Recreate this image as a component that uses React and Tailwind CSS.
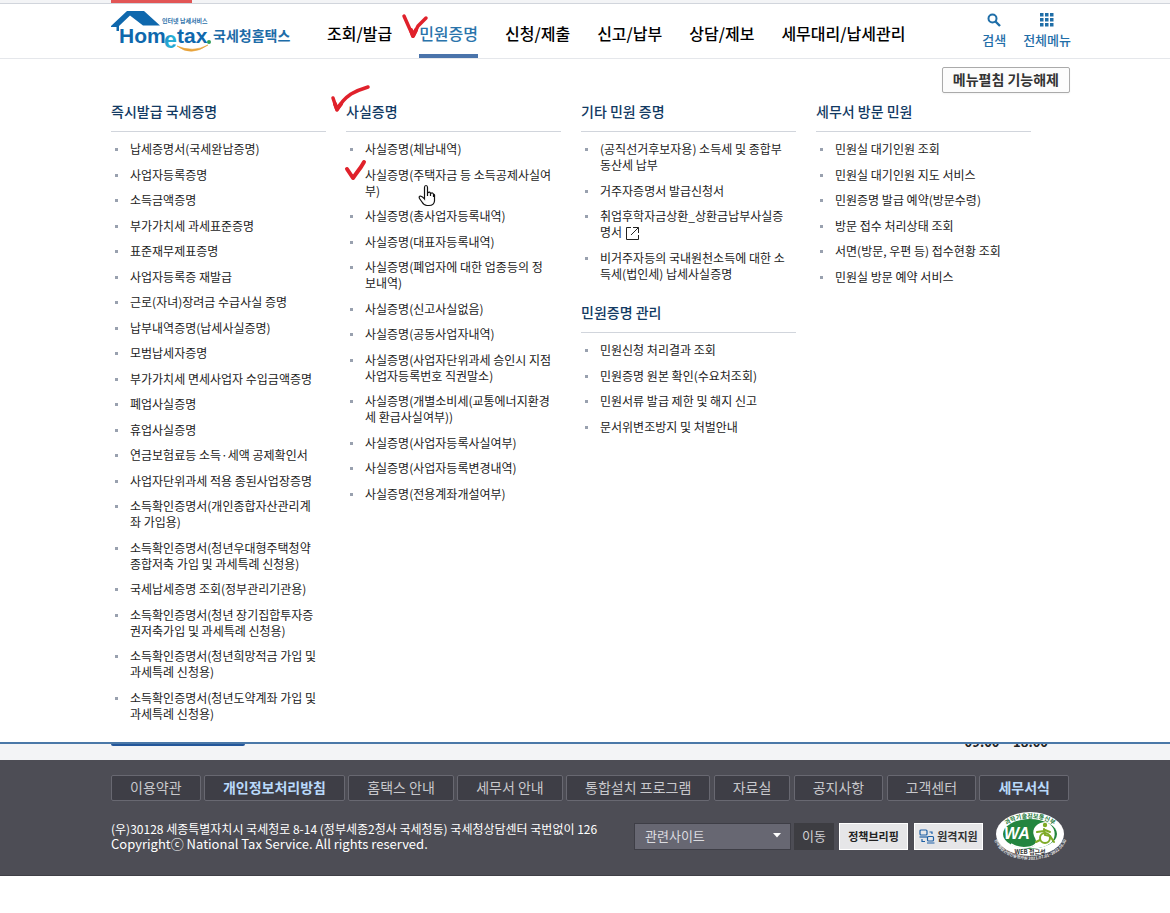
import React, { useState } from 'react';

const NAV_ITEMS = ['조회/발급', '민원증명', '신청/제출', '신고/납부', '상담/제보', '세무대리/납세관리'];

const MENU_COLUMNS = [
    [
        {
            title: '즉시발급 국세증명',
            items: [
                '납세증명서(국세완납증명)',
                '사업자등록증명',
                '소득금액증명',
                '부가가치세 과세표준증명',
                '표준재무제표증명',
                '사업자등록증 재발급',
                '근로(자녀)장려금 수급사실 증명',
                '납부내역증명(납세사실증명)',
                '모범납세자증명',
                '부가가치세 면세사업자 수입금액증명',
                '폐업사실증명',
                '휴업사실증명',
                '연금보험료등 소득·세액 공제확인서',
                '사업자단위과세 적용 종된사업장증명',
                '소득확인증명서(개인종합자산관리계\n좌 가입용)',
                '소득확인증명서(청년우대형주택청약\n종합저축 가입 및 과세특례 신청용)',
                '국세납세증명 조회(정부관리기관용)',
                '소득확인증명서(청년 장기집합투자증\n권저축가입 및 과세특례 신청용)',
                '소득확인증명서(청년희망적금 가입 및\n과세특례 신청용)',
                '소득확인증명서(청년도약계좌 가입 및\n과세특례 신청용)',
            ],
        },
    ],
    [
        {
            title: '사실증명',
            items: [
                '사실증명(체납내역)',
                '사실증명(주택자금 등 소득공제사실여\n부)',
                '사실증명(총사업자등록내역)',
                '사실증명(대표자등록내역)',
                '사실증명(폐업자에 대한 업종등의 정\n보내역)',
                '사실증명(신고사실없음)',
                '사실증명(공동사업자내역)',
                '사실증명(사업자단위과세 승인시 지점\n사업자등록번호 직권말소)',
                '사실증명(개별소비세(교통에너지환경\n세 환급사실여부))',
                '사실증명(사업자등록사실여부)',
                '사실증명(사업자등록변경내역)',
                '사실증명(전용계좌개설여부)',
            ],
        },
    ],
    [
        {
            title: '기타 민원 증명',
            items: [
                '(공직선거후보자용) 소득세 및 종합부\n동산세 납부',
                '거주자증명서 발급신청서',
                '취업후학자금상환_상환금납부사실증\n명서',
                '비거주자등의 국내원천소득에 대한 소\n득세(법인세) 납세사실증명',
            ],
        },
        {
            title: '민원증명 관리',
            items: [
                '민원신청 처리결과 조회',
                '민원증명 원본 확인(수요처조회)',
                '민원서류 발급 제한 및 해지 신고',
                '문서위변조방지 및 처벌안내',
            ],
        },
    ],
    [
        {
            title: '세무서 방문 민원',
            items: [
                '민원실 대기인원 조회',
                '민원실 대기인원 지도 서비스',
                '민원증명 발급 예약(방문수령)',
                '방문 접수 처리상태 조회',
                '서면(방문, 우편 등) 접수현황 조회',
                '민원실 방문 예약 서비스',
            ],
        },
    ],
];

const EXTERNAL_ITEM = '취업후학자금상환_상환금납부사실증\n명서';

const FOOTER_LINKS = [
    { label: '이용약관' },
    { label: '개인정보처리방침', strong: true },
    { label: '홈택스 안내' },
    { label: '세무서 안내' },
    { label: '통합설치 프로그램' },
    { label: '자료실' },
    { label: '공지사항' },
    { label: '고객센터' },
    { label: '세무서식', strong: true },
];

const Logo = () => (
    <svg width="180" height="48" viewBox="0 0 180 48" role="img" aria-label="Hometax 국세청홈택스">
        <defs>
            <linearGradient id="letterE" x1="0" y1="0" x2="1" y2="1">
                <stop offset="0" stopColor="#1f7fc4" />
                <stop offset="0.6" stopColor="#27b3d6" />
                <stop offset="1" stopColor="#1c86c4" />
            </linearGradient>
        </defs>
        <path d="M0 19 L16 4 H33 L49 18.500 H32 L19 8.500 L8 19 V24 H5.500 V20 H0 Z" fill="#0f68ad" />
        <text x="8" y="36" fontSize="21" fontWeight="700" fill="#0f68ad" fontFamily="'Liberation Sans', sans-serif">Hom</text>
        <text x="53" y="41" fontSize="23" fontWeight="700" fill="url(#letterE)" fontFamily="'Liberation Sans', sans-serif">e</text>
        <text x="66" y="36" fontSize="21" fontWeight="700" fill="#0f68ad" fontFamily="'Liberation Sans', sans-serif">tax</text>
        <circle cx="98" cy="35" r="2" fill="#2e9e5b" />
        <path d="M66 39 Q80 50 97 38 Q82 46 66 39 Z" fill="#e8a33a" stroke="#e8a33a" strokeWidth="0.600" />
        <text x="51" y="16" fontSize="6" fontWeight="700" fill="#2a6fa8" fontFamily="'Noto Sans CJK KR', sans-serif">인터넷 납세서비스</text>
        <text x="102" y="34" fontSize="14" fontWeight="700" fill="#1d6ca8" fontFamily="'Noto Sans CJK KR', sans-serif">국세청홈택스</text>
    </svg>
);

const SearchIcon = () => (
    <svg width="14" height="14" viewBox="0 0 14 14" fill="none" stroke="#1f6ea8" aria-hidden="true">
        <circle cx="5.500" cy="5.500" r="4" strokeWidth="2" />
        <path d="M8.500 8.500 L13 13" strokeWidth="2.400" />
    </svg>
);

const GridIcon = () => (
    <svg width="14" height="14" viewBox="0 0 14 14" fill="#1f6ea8" aria-hidden="true">
        {[0, 5, 10].map((y) => [0, 5, 10].map((x) => <rect key={`${x}-${y}`} x={x} y={y} width="3.500" height="3.500" />))}
    </svg>
);

const ExternalIcon = () => (
    <svg className="inline-block ml-1 -my-1 align-middle" width="13" height="13" viewBox="0 0 13 13" fill="none" stroke="#222" aria-hidden="true">
        <path d="M5 0.500 H0.500 V12.500 H12.500 V8" />
        <path d="M7 0.500 H12.500 V6 M12.500 0.500 L5 8" />
    </svg>
);

const RemoteIcon = () => (
    <svg width="16" height="15" viewBox="0 0 16 15" fill="none" stroke="#1d5fa5" strokeWidth="1.200" aria-hidden="true">
        <rect x="1" y="1" width="7" height="5" rx="1" />
        <path d="M0.500 8 H8.500" />
        <rect x="8.500" y="7.500" width="6" height="4.500" rx="1" fill="#e6e6e8" />
        <path d="M8 14 H15.500 M10.500 3 H13 V5 M3 10 V12.500 H6" />
    </svg>
);

const WebAccessBadge = () => (
    <svg width="74" height="54" viewBox="0 0 74 54" role="img" aria-label="WA WEB 접근성">
        <defs>
            <path id="badgeTop" d="M7 26 A 29 17 0 0 1 65 26" />
            <path id="badgeBottom" d="M0 29 C 7 58 65 58 73 29" />
        </defs>
        <ellipse cx="36" cy="25" rx="34" ry="22" fill="#fff" />
        <ellipse cx="36" cy="25" rx="27" ry="15" fill="#23853f" />
        <path d="M40 27 C37 19 44 13 52 13 C62 17 63 28 57 34 C50 39 42 40 35 39 C42 37 44 34 40 27 Z" fill="#fff" />
        <path d="M17 35 C27 41 40 39 43 33" fill="none" stroke="#fff" strokeWidth="1.500" />
        <text x="10" y="30" fontSize="16" fontWeight="700" fontStyle="italic" fill="#fff" fontFamily="'Liberation Sans', sans-serif">WA</text>
        <g fill="none" stroke="#7fab26" strokeWidth="2" strokeLinecap="round">
            <circle cx="51" cy="29" r="5" />
            <path d="M50 20 L51 26 L56 27 L60 33 M50 22 L43 23 M51 21 L56 23 M46 31 L42 33" />
        </g>
        <circle cx="51" cy="16" r="2.200" fill="#7fab26" />
        <text fontSize="6" fontWeight="700" fill="#267a3c" fontFamily="'Noto Sans CJK KR', sans-serif">
            <textPath href="#badgeTop" startOffset="50%" textAnchor="middle">과학기술정보통신부</textPath>
        </text>
        <text x="36" y="45" textAnchor="middle" fontSize="6" fontWeight="700" fill="#333" fontFamily="'Noto Sans CJK KR', sans-serif">WEB 접근성</text>
        <text fontSize="4" fontWeight="700" fill="#eee" fontFamily="'Noto Sans CJK KR', sans-serif">
            <textPath href="#badgeBottom" startOffset="50%" textAnchor="middle">한국웹접근성인증평가원 2021.07.01~2022.06.30</textPath>
        </text>
    </svg>
);

// hand-drawn red check marks and the pointer, laid over the menu
const PenMarks = () => (
    <svg className="absolute left-[330px] top-2.5 pointer-events-none" width="120" height="200" viewBox="330 10 120 200" fill="none" aria-hidden="true">
        <g stroke="#e0212b" strokeLinecap="round" strokeLinejoin="round">
            <path d="M404 16 L408 25 L413 36 L418 26 L426 18" strokeWidth="3.500" />
            <path d="M411 30 L413 36 L416 30" strokeWidth="4" />
            <path d="M333 98 L337 110 Q342 100 351 94 Q358 90 368 87" strokeWidth="3.500" />
            <path d="M335 104 L337 109 L341 104" strokeWidth="4" />
            <path d="M347 169 L353 178 Q358 171 361 167 L364 162" strokeWidth="4" />
        </g>
        <path
            d="M424.500 199 V187.500 Q424.500 185.500 426 185.500 Q427.500 185.500 427.500 187.500 V193 Q430 191 430.500 193.500 Q433 192 433.500 194.500 Q435 194 434.500 197 V201 Q434 205.500 429 205.500 H427 Q424 205.500 422 202 L419.500 198.500 Q418.500 196 420.500 196 Q422.500 196.500 424.500 199 Z M427.500 192 V196 M430.500 193 V196 M433.500 194 V197"
            fill="#fff"
            stroke="#111"
            strokeWidth="1.200"
        />
    </svg>
);

const MenuGroup = ({ title, items }) => (
    <section>
        <h2 className="pb-[11px] border-b border-gray-300 text-sm leading-[18px] font-medium text-[#123a63]">{title}</h2>
        <ul className="mt-[9px] flex flex-col gap-[9px]">
            {items.map((item) => (
                <li key={item} className="flex gap-3 pl-1 odd:pb-px text-xs leading-4">
                    <span className="mt-[7px] w-[3px] h-[3px] shrink-0 bg-gray-400" />
                    <a href="#" className="whitespace-pre-line text-[#222] hover:underline">
                        {item}
                        {item === EXTERNAL_ITEM && <ExternalIcon />}
                    </a>
                </li>
            ))}
        </ul>
    </section>
);

const App = () => {
    const [active, setActive] = useState('민원증명');
    const [site, setSite] = useState('');

    return (
        <div className="relative bg-white text-[#222] font-['Noto_Sans_CJK_KR',sans-serif]">
            <div className="h-1 pl-[111px] bg-gray-100 border-b border-gray-300">
                <div className="w-[81px] h-[3px] bg-[#e25555]" />
            </div>

            <header className="h-[55px] pl-[111px] pr-[99px] flex border-b border-gray-200">
                <a href="#" className="pt-[3px] w-[180px] shrink-0">
                    <Logo />
                </a>
                <nav className="ml-9 flex gap-[27px]">
                    {NAV_ITEMS.map((label) => (
                        <button
                            key={label}
                            type="button"
                            onClick={() => setActive(label)}
                            className={`pt-2 whitespace-nowrap text-base font-medium border-b-4 ${label === active ? 'text-[#2a74ab] border-[#4a74ab]' : 'text-black border-transparent'}`}
                        >
                            {label}
                        </button>
                    ))}
                </nav>
                <div className="ml-auto flex gap-[17px] text-[13px] leading-5 font-medium text-[#1f6ea8]">
                    <button type="button" className="pt-[9px] flex flex-col items-center gap-[3px] whitespace-nowrap">
                        <SearchIcon />
                        검색
                    </button>
                    <button type="button" className="pt-[9px] flex flex-col items-center gap-[3px] whitespace-nowrap">
                        <GridIcon />
                        전체메뉴
                    </button>
                </div>
            </header>

            <main className="pt-2 pl-[111px] pr-[100px] pb-5 border-b-2 border-[#4a78a8]">
                <div className="flex justify-end">
                    <button type="button" className="h-[26px] px-2.5 pb-[3px] border border-[#aaa] rounded-xs bg-[#fcfcfc] shadow-xs text-sm leading-5 font-bold text-[#333]">
                        메뉴펼침 기능해제
                    </button>
                </div>
                <div className="mt-[9px] pr-[39px] grid grid-cols-4 gap-5">
                    {MENU_COLUMNS.map((groups) => (
                        <div key={groups[0].title} className="flex flex-col gap-[21px]">
                            {groups.map((group) => (
                                <MenuGroup key={group.title} {...group} />
                            ))}
                        </div>
                    ))}
                </div>
            </main>

            <div className="h-4 pl-[111px] pr-[122px] flex items-start justify-between overflow-hidden bg-gray-100">
                <div className="w-[134px] h-0.5 rounded-b-sm bg-[#24579a]" />
                <p className="-mt-2.5 text-[13px] leading-4 font-bold text-[#222]">09:00 ~ 18:00</p>
            </div>

            <footer className="pt-[15px] pl-[111px] pr-[101px] pb-3 bg-[#4d4d55] border-b border-[#3f3f46]">
                <ul className="flex justify-between">
                    {FOOTER_LINKS.map(({ label, strong }) => (
                        <li key={label}>
                            <a
                                href="#"
                                className={`block px-[18px] pt-px pb-[3px] whitespace-nowrap border border-[#686871] rounded-xs bg-[#3e3e46] text-sm leading-5 ${strong ? 'font-bold text-[#b9d9fa]' : 'text-[#c8c8cc]'}`}
                            >
                                {label}
                            </a>
                        </li>
                    ))}
                </ul>
                <div className="mt-2 flex items-center">
                    <address className="w-[523px] not-italic text-xs leading-[15px] text-white whitespace-nowrap">
                        <p>(우)30128 세종특별자치시 국세청로 8-14 (정부세종2청사 국세청동) 국세청상담센터 국번없이 126</p>
                        <p className="text-[13px] leading-[15px]">Copyrightⓒ National Tax Service. All rights reserved.</p>
                    </address>
                    <div className="relative">
                        <select
                            aria-label="관련사이트"
                            value={site}
                            onChange={(e) => setSite(e.target.value)}
                            className="w-[157px] h-[27px] px-2.5 appearance-none border border-[#3e3e46] bg-[#676772] text-[13px] text-[#dcdce0]"
                        >
                            <option value="">관련사이트</option>
                        </select>
                        <svg className="absolute right-2.5 top-[11px] pointer-events-none" width="8" height="5" viewBox="0 0 8 5" fill="#fff" aria-hidden="true">
                            <path d="M0 0 H8 L4 4.500 Z" />
                        </svg>
                    </div>
                    <button type="button" className="ml-[3px] w-10 h-[27px] bg-[#3d3d42] text-[13px] text-[#d0d0d4]">
                        이동
                    </button>
                    <a href="#" className="ml-[5px] w-[69px] h-[27px] flex items-center justify-center border border-white bg-[#e6e6e8] text-[11px] font-bold text-[#222]">
                        정책브리핑
                    </a>
                    <a href="#" className="ml-1.5 w-[69px] h-[27px] flex items-center justify-center gap-0.5 border border-white bg-[#e6e6e8] text-[11px] font-bold text-[#333] whitespace-nowrap">
                        <RemoteIcon />
                        원격지원
                    </a>
                    <a href="#" className="ml-[11px] shrink-0">
                        <WebAccessBadge />
                    </a>
                </div>
            </footer>

            <PenMarks />
        </div>
    );
};

export default App;
